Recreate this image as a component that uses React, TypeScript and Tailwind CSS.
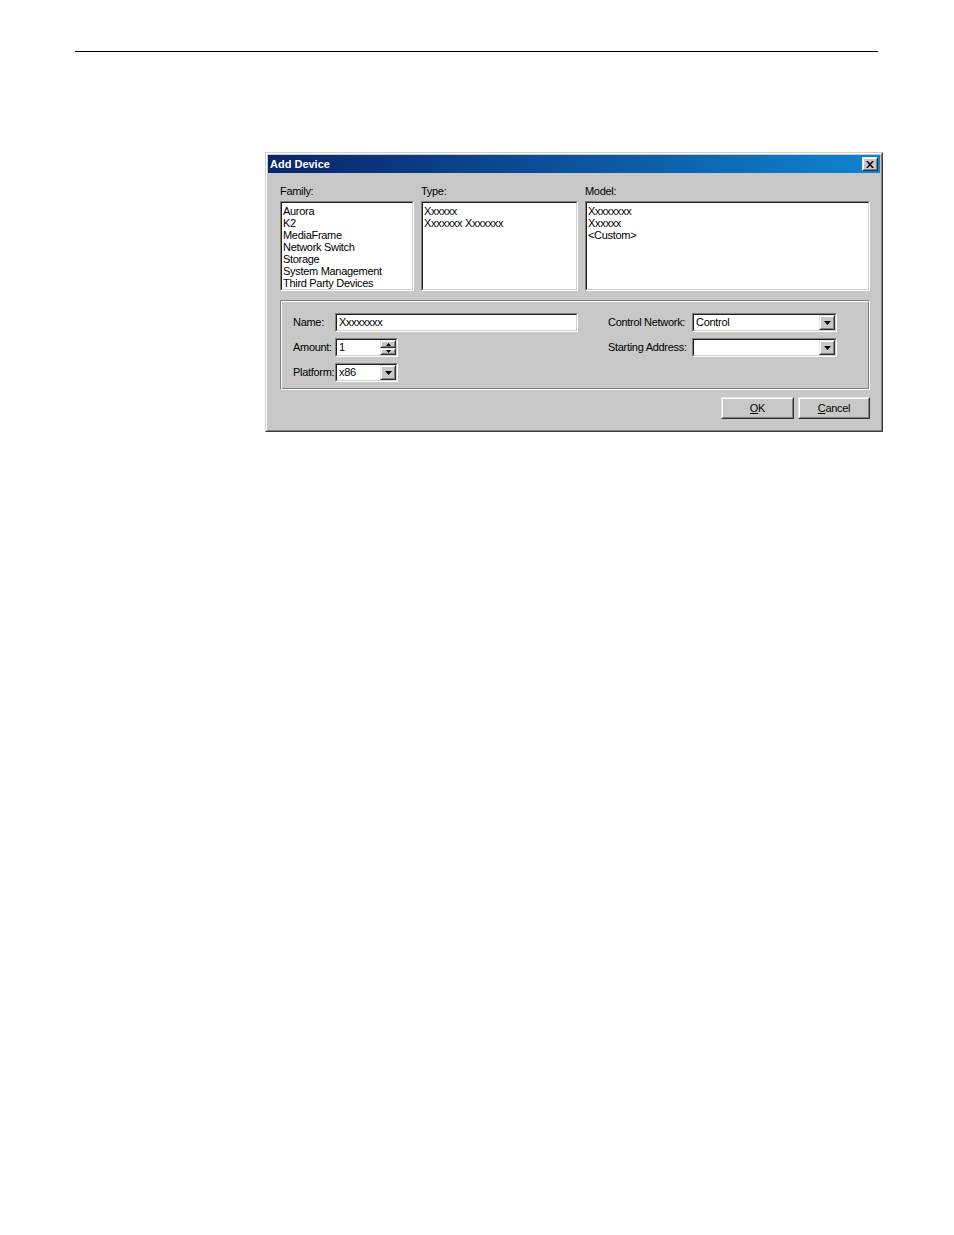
import React from 'react';

const font = "font-['Liberation_Sans',Arial,sans-serif]";

function Sunken({ className = '', children }: { className?: string; children?: React.ReactNode }) {
    return (
        <div className={`shrink-0 border border-[#808080] border-r-white border-b-white ${className}`}>
            <div className="h-full w-full border border-[#202020] border-r-[#d4d0c8] border-b-[#d4d0c8] bg-white">
                {children}
            </div>
        </div>
    );
}

function Raised({ className = '', children }: { className?: string; children?: React.ReactNode }) {
    return (
        <div className={`shrink-0 border border-[#e8e8e8] border-r-[#303030] border-b-[#303030] bg-[#c8c8c8] ${className}`}>
            <div className="flex h-full w-full items-center justify-center border border-white border-r-[#808080] border-b-[#808080]">
                {children}
            </div>
        </div>
    );
}

function DownArrow({ w = 7, h = 4 }: { w?: number; h?: number }) {
    return (
        <svg width={w} height={h} viewBox={`0 0 ${w} ${h}`} className="block">
            <polygon points={`0,0 ${w},0 ${w / 2},${h}`} fill="#000" />
        </svg>
    );
}

function UpArrow() {
    return (
        <svg width={5} height={3} viewBox="0 0 5 3" className="block">
            <polygon points="0,3 5,3 2.5,0" fill="#000" />
        </svg>
    );
}

function Combo({ width, value }: { width: string; value?: string }) {
    return (
        <Sunken className={`${width} h-[19px]`}>
            <div className="flex h-full items-center justify-between">
                <span className="pl-[2px] leading-none">{value}</span>
                <Raised className="h-[15px] w-[16px]">
                    <DownArrow />
                </Raised>
            </div>
        </Sunken>
    );
}

function ListBox({ width, items }: { width: string; items: string[] }) {
    return (
        <Sunken className={`${width} h-[90px]`}>
            <div className="pl-[1px] pt-[2px]">
                {items.map((item) => (
                    <div key={item} className="h-[12px] leading-[12px] whitespace-nowrap">
                        {item}
                    </div>
                ))}
            </div>
        </Sunken>
    );
}

export default function App() {
    return (
        <div className={`w-[954px] h-[1235px] bg-white text-black ${font}`}>
            <div className="h-[51px]" />
            <div className="ml-[75px] h-px w-[803px] bg-black" />
            <div className="h-[100px]" />

            {/* Add Device dialog */}
            <div className="ml-[265px] h-[280px] w-[618px] border border-[#d4d0c8] border-r-[#404040] border-b-[#404040] text-[11px] tracking-[-0.3px]">
                <div className="flex h-full flex-col border border-white border-r-[#808080] border-b-[#808080] bg-[#c8c8c8] p-px">
                    <div className="flex h-[18px] items-center justify-between bg-gradient-to-r from-[#0a246a] to-[#1084d0] pl-[2px] pr-[2px]">
                        <span className="font-bold leading-none tracking-[0px] text-white">Add Device</span>
                        <Raised className="h-[14px] w-[16px]">
                            <svg width={8} height={7} viewBox="0 0 8 7" className="block">
                                <path d="M0 0 L2 0 L4 2.5 L6 0 L8 0 L5 3.5 L8 7 L6 7 L4 4.5 L2 7 L0 7 L3 3.5 Z" fill="#000" />
                            </svg>
                        </Raised>
                    </div>

                    <div className="pl-[12px] pr-[10px]">
                        {/* lists */}
                        <div className="mt-[12px] flex gap-[7px]">
                            <div>
                                <div className="mb-[3px] h-[13px] leading-[13px]">Family:</div>
                                <ListBox
                                    width="w-[134px]"
                                    items={['Aurora', 'K2', 'MediaFrame', 'Network Switch', 'Storage', 'System Management', 'Third Party Devices']}
                                />
                            </div>
                            <div>
                                <div className="mb-[3px] h-[13px] leading-[13px]">Type:</div>
                                <ListBox width="w-[157px]" items={['Xxxxxx', 'Xxxxxxx Xxxxxxx']} />
                            </div>
                            <div>
                                <div className="mb-[3px] h-[13px] leading-[13px]">Model:</div>
                                <ListBox width="w-[285px]" items={['Xxxxxxxx', 'Xxxxxx', '<Custom>']} />
                            </div>
                        </div>

                        {/* group box */}
                        <div className="mt-[9px] h-[90px] w-[590px] border border-[#808080] border-r-white border-b-white">
                            <div className="flex h-full border border-white border-r-[#808080] border-b-[#808080] pl-[11px] pt-[11px]">
                                <div className="flex w-[285px] shrink-0 flex-col gap-[6px]">
                                    <div className="flex h-[19px] items-center">
                                        <span className="w-[42px] shrink-0 whitespace-nowrap">Name:</span>
                                        <Sunken className="h-[19px] w-[243px]">
                                            <div className="flex h-full items-center pl-[2px] leading-none">Xxxxxxxx</div>
                                        </Sunken>
                                    </div>
                                    <div className="flex h-[19px] items-center">
                                        <span className="w-[42px] shrink-0 whitespace-nowrap">Amount:</span>
                                        <Sunken className="h-[19px] w-[63px]">
                                            <div className="flex h-full items-center justify-between">
                                                <span className="pl-[2px] leading-none">1</span>
                                                <div className="flex h-full flex-col">
                                                    <Raised className="h-[8px] w-[16px]">
                                                        <UpArrow />
                                                    </Raised>
                                                    <Raised className="h-[7px] w-[16px]">
                                                        <DownArrow w={5} h={3} />
                                                    </Raised>
                                                </div>
                                            </div>
                                        </Sunken>
                                    </div>
                                    <div className="flex h-[19px] items-center">
                                        <span className="w-[42px] shrink-0 whitespace-nowrap">Platform:</span>
                                        <Combo width="w-[63px]" value="x86" />
                                    </div>
                                </div>

                                <div className="ml-[30px] flex flex-col gap-[6px]">
                                    <div className="flex h-[19px] items-center">
                                        <span className="w-[84px] shrink-0 whitespace-nowrap">Control Network:</span>
                                        <Combo width="w-[145px]" value="Control" />
                                    </div>
                                    <div className="flex h-[19px] items-center">
                                        <span className="w-[84px] shrink-0 whitespace-nowrap">Starting Address:</span>
                                        <Combo width="w-[145px]" />
                                    </div>
                                </div>
                            </div>
                        </div>

                        {/* buttons */}
                        <div className="mt-[7px] flex justify-end gap-[4px]">
                            <Raised className="h-[22px] w-[73px]">
                                <span>
                                    <span className="underline">O</span>K
                                </span>
                            </Raised>
                            <Raised className="h-[22px] w-[72px]">
                                <span>
                                    <span className="underline">C</span>ancel
                                </span>
                            </Raised>
                        </div>
                    </div>
                </div>
            </div>
        </div>
    );
}
